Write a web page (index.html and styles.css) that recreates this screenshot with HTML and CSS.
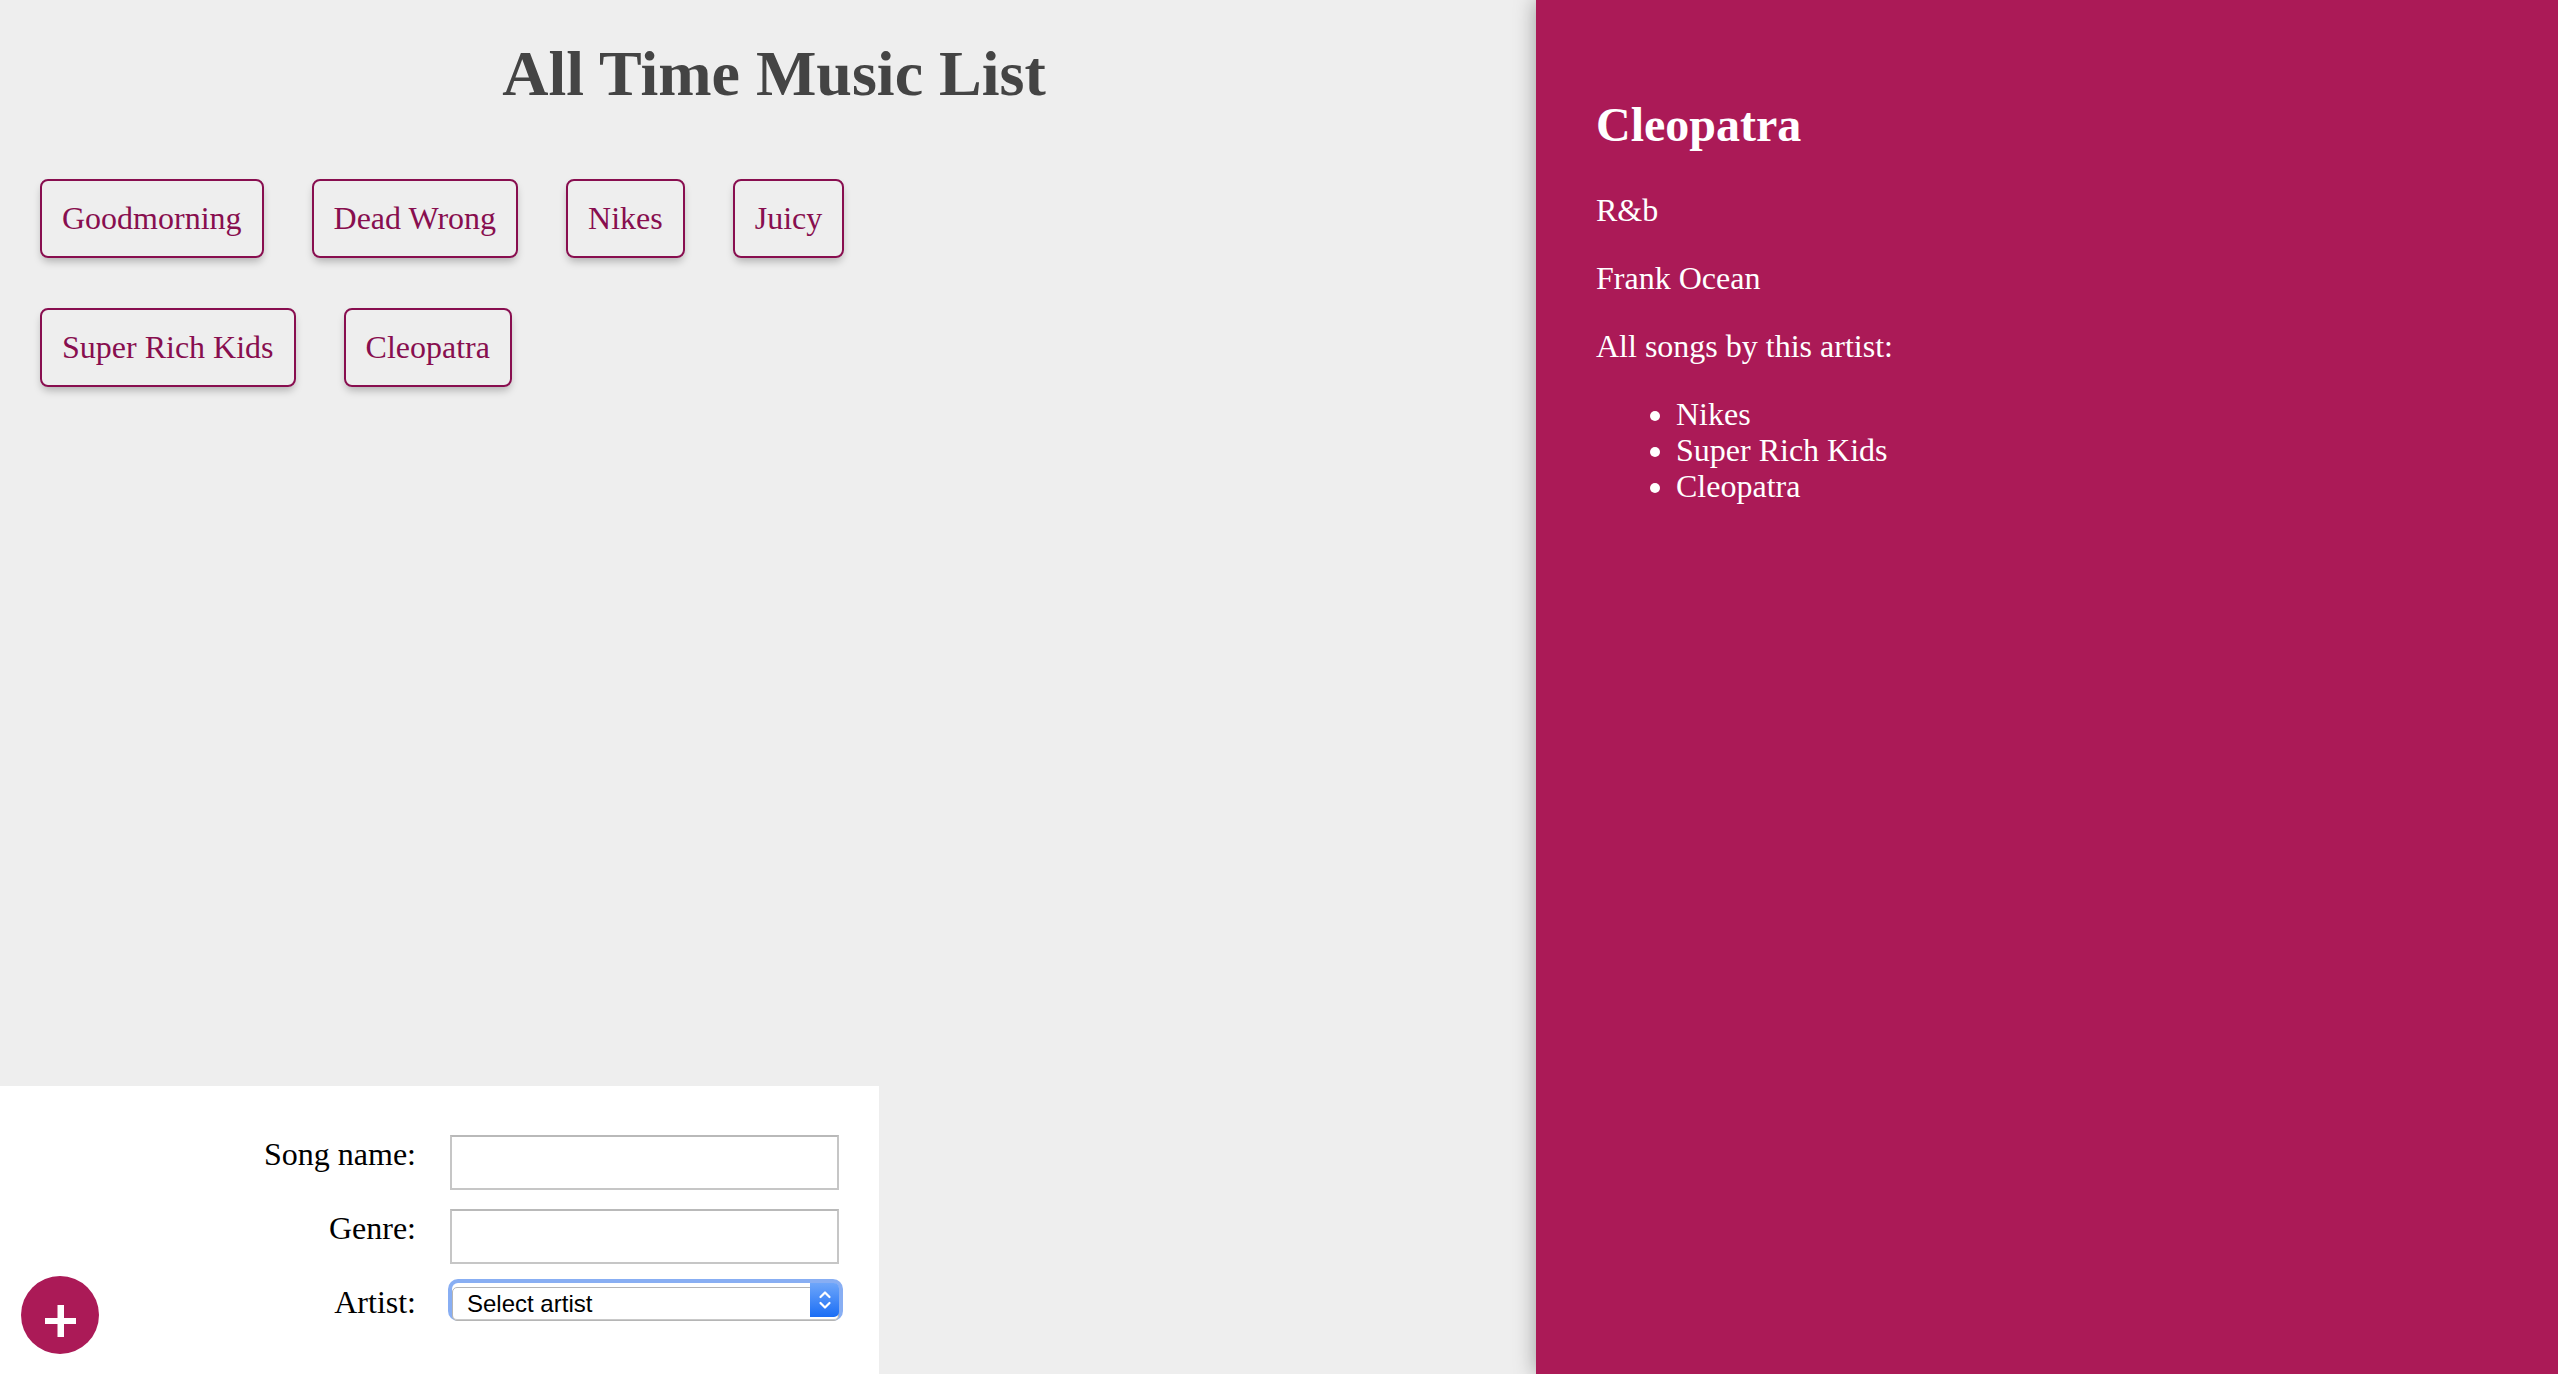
FILE: index.html
```html
<!DOCTYPE html>
<html lang="en">
<head>
<meta charset="utf-8">
<title>All Time Music List</title>
<link rel="stylesheet" href="styles.css">
</head>
<body>
<div class="app">
  <main class="main">
    <h1 class="title">All Time Music List</h1>
    <div class="songs">
      <button class="song">Goodmorning</button>
      <button class="song">Dead Wrong</button>
      <button class="song">Nikes</button>
      <button class="song">Juicy</button>
      <button class="song">Super Rich Kids</button>
      <button class="song">Cleopatra</button>
    </div>
    <form class="add-form">
      <label class="label" for="song-name">Song name:</label>
      <input class="field" id="song-name" type="text">
      <label class="label" for="genre">Genre:</label>
      <input class="field" id="genre" type="text">
      <label class="label" for="artist">Artist:</label>
      <div class="select-wrap">
        <select class="select" id="artist">
          <option>Select artist</option>
        </select>
        <span class="select-arrow">
          <svg width="14" height="22" viewBox="0 0 14 22"><path d="M2.5 8 L7 3.5 L11.5 8 M2.5 14 L7 18.5 L11.5 14" fill="none" stroke="#fff" stroke-width="2.2" stroke-linecap="round" stroke-linejoin="round"/></svg>
        </span>
      </div>
    </form>
    <button class="fab" aria-label="Add song">
      <svg width="32" height="33" viewBox="0 0 32 33"><rect x="0" y="13" width="31" height="6" fill="#fff"/><rect x="12.5" y="0" width="6.5" height="32" fill="#fff"/></svg>
    </button>
  </main>
  <aside class="details">
    <h2 class="details-title">Cleopatra</h2>
    <p class="details-line">R&amp;b</p>
    <p class="details-line">Frank Ocean</p>
    <p class="details-line">All songs by this artist:</p>
    <ul class="details-list">
      <li>Nikes</li>
      <li>Super Rich Kids</li>
      <li>Cleopatra</li>
    </ul>
  </aside>
</div>
</body>
</html>
```
FILE: styles.css
```css
html, body {
  margin: 0;
  padding: 0;
}
body {
  background: #eeeeee;
  font-family: "Liberation Serif", "Times New Roman", serif;
  font-size: 32px;
}
.app {
  display: flex;
  height: 100vh;
  overflow: hidden;
}
.main {
  width: 1536px;
  flex: none;
  display: flex;
  flex-direction: column;
  position: relative;
}
.title {
  margin: 38px 0 0;
  padding-left: 12px;
  text-align: center;
  font-size: 64px;
  font-weight: bold;
  color: #444444;
  line-height: 71px;
}
.songs {
  display: flex;
  flex-wrap: wrap;
  gap: 50px 48px;
  padding: 70px 40px 0;
  width: 900px;
}
.song {
  font-family: "Liberation Serif", "Times New Roman", serif;
  font-size: 32px;
  line-height: 35px;
  color: #880e4f;
  background: transparent;
  border: 2px solid #880e4f;
  border-radius: 8px;
  padding: 20px 20px;
  box-shadow: 0 5px 8px -2px rgba(0, 0, 0, 0.28);
  cursor: pointer;
  margin: 0;
}
.add-form {
  margin-top: auto;
  width: 879px;
  box-sizing: border-box;
  background: #ffffff;
  padding: 49px 40px 54px 0;
  display: grid;
  grid-template-columns: 416px 389px;
  column-gap: 34px;
  row-gap: 19px;
  align-items: start;
}
.label {
  text-align: right;
  padding-top: 2px;
  color: #000;
  line-height: 35px;
}
.field {
  height: 55px;
  box-sizing: border-box;
  margin: 0;
  border: 2px solid #c6c6c6;
  border-top-color: #b9b9b9;
  background: #fff;
  font-size: 26px;
  padding: 0 8px;
}
.select-wrap {
  position: relative;
  height: 34px;
  margin-left: 2px;
  width: 387px;
  border-radius: 6px;
  box-shadow: 0 0 0 4px #88aef3;
}
.select {
  appearance: none;
  -webkit-appearance: none;
  width: 100%;
  height: 34px;
  box-sizing: border-box;
  margin: 0;
  border: 1px solid #b5b5b5;
  border-radius: 5px;
  background: #ffffff;
  font-family: "Liberation Sans", Arial, sans-serif;
  font-size: 24px;
  color: #000;
  padding: 0 0 0 14px;
  box-shadow: inset 0 -1px 0 #c9c9c9;
}
.select-arrow {
  position: absolute;
  top: 0;
  right: 0;
  width: 29px;
  height: 34px;
  border-radius: 0 5px 5px 0;
  background: linear-gradient(#6ea6fa, #1b6ef5);
  display: flex;
  align-items: center;
  justify-content: center;
  pointer-events: none;
}
.fab {
  position: absolute;
  left: 21px;
  bottom: 20px;
  width: 78px;
  height: 78px;
  border-radius: 50%;
  border: none;
  padding: 13px 0 0 1px;
  margin: 0;
  background: #ab1a57;
  display: flex;
  align-items: center;
  justify-content: center;
  cursor: pointer;
}
.details {
  flex: 1;
  background: #ab1a57;
  color: #ffffff;
  padding: 57px 60px;
  box-shadow: 0 0 20px rgba(0, 0, 0, 0.35);
  position: relative;
  z-index: 1;
}
.details-title {
  font-size: 48px;
  font-weight: bold;
  margin: 40px 0 40px;
  line-height: 55px;
}
.details-line {
  margin: 32px 0;
  line-height: 36px;
}
.details-list {
  margin: 32px 0;
  padding-left: 80px;
  line-height: 36px;
}
```
